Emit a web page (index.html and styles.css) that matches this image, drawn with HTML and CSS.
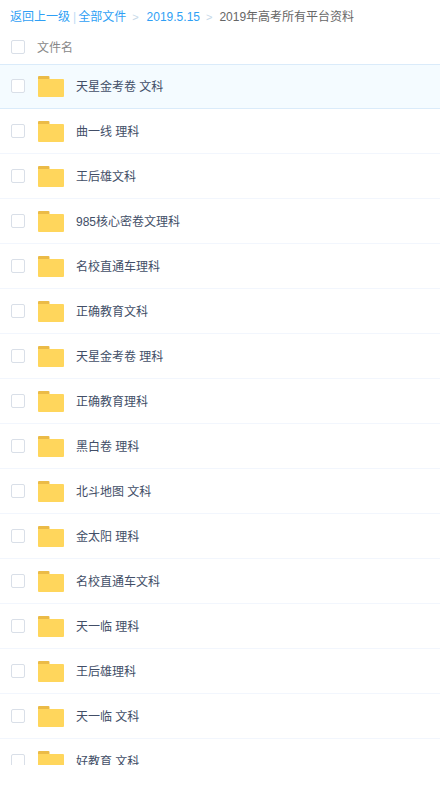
FILE: index.html
```html
<!DOCTYPE html>
<html lang="zh-CN">
<head>
<meta charset="utf-8">
<title>2019年高考所有平台资料</title>
<link rel="stylesheet" href="styles.css">
</head>
<body>
<svg class="defs" width="0" height="0" aria-hidden="true">
  <symbol id="folder" viewBox="0 0 26 21">
    <path fill="#EBBB47" d="M1 0h9.5a1 1 0 0 1 1 1v3H0V1a1 1 0 0 1 1-1z"/>
    <path fill="#FFD65C" d="M0 3h25a1 1 0 0 1 1 1v16a1 1 0 0 1-1 1H1a1 1 0 0 1-1-1z"/>
  </symbol>
</svg>
<main class="page">
  <nav class="crumbs">
    <a class="link">返回上一级</a><span class="bar">|</span><a class="link">全部文件</a>
    <span class="sep">&gt;</span><a class="link">2019.5.15</a>
    <span class="sep sep-last">&gt;</span><span class="current">2019年高考所有平台资料</span>
  </nav>
  <div class="head">
    <span class="check"></span>
    <span class="head-name">文件名</span>
  </div>
  <ul class="list">
    <li class="row active"><span class="check"></span><svg class="folder"><use href="#folder"/></svg><span class="name">天星金考卷 文科</span></li>
    <li class="row"><span class="check"></span><svg class="folder"><use href="#folder"/></svg><span class="name">曲一线 理科</span></li>
    <li class="row"><span class="check"></span><svg class="folder"><use href="#folder"/></svg><span class="name">王后雄文科</span></li>
    <li class="row"><span class="check"></span><svg class="folder"><use href="#folder"/></svg><span class="name">985核心密卷文理科</span></li>
    <li class="row"><span class="check"></span><svg class="folder"><use href="#folder"/></svg><span class="name">名校直通车理科</span></li>
    <li class="row"><span class="check"></span><svg class="folder"><use href="#folder"/></svg><span class="name">正确教育文科</span></li>
    <li class="row"><span class="check"></span><svg class="folder"><use href="#folder"/></svg><span class="name">天星金考卷 理科</span></li>
    <li class="row"><span class="check"></span><svg class="folder"><use href="#folder"/></svg><span class="name">正确教育理科</span></li>
    <li class="row"><span class="check"></span><svg class="folder"><use href="#folder"/></svg><span class="name">黑白卷 理科</span></li>
    <li class="row"><span class="check"></span><svg class="folder"><use href="#folder"/></svg><span class="name">北斗地图 文科</span></li>
    <li class="row"><span class="check"></span><svg class="folder"><use href="#folder"/></svg><span class="name">金太阳 理科</span></li>
    <li class="row"><span class="check"></span><svg class="folder"><use href="#folder"/></svg><span class="name">名校直通车文科</span></li>
    <li class="row"><span class="check"></span><svg class="folder"><use href="#folder"/></svg><span class="name">天一临 理科</span></li>
    <li class="row"><span class="check"></span><svg class="folder"><use href="#folder"/></svg><span class="name">王后雄理科</span></li>
    <li class="row"><span class="check"></span><svg class="folder"><use href="#folder"/></svg><span class="name">天一临 文科</span></li>
    <li class="row"><span class="check"></span><svg class="folder"><use href="#folder"/></svg><span class="name">好教育 文科</span></li>
  </ul>
</main>
</body>
</html>
```
FILE: styles.css
```css
* { box-sizing: border-box; }
html, body { margin: 0; padding: 0; background: #fff; }
body {
  width: 440px;
  height: 788px;
  overflow: hidden;
  font-family: "Liberation Sans", "Noto Sans CJK SC", sans-serif;
  font-size: 12px;
  color: #424e67;
}
.defs { display: block; height: 0; }
.page { display: block; }
.crumbs {
  display: flex;
  align-items: baseline;
  height: 32px;
  padding: 7px 0 0 10px;
  color: #666;
  white-space: nowrap;
}
.link { color: #2f9ff5; }
.bar { color: #c1dcf5; margin: 0 2px 0 3px; }
.sep { color: #c5d8e8; font-size: 11px; margin: 0 8px 0 6px; }
.sep-last { margin: 0 7px 0 6px; }
.current { color: #666; }
.head {
  display: flex;
  align-items: center;
  height: 32px;
  padding: 0 0 2px 11px;
}
.head-name { color: #888; margin-left: 12px; padding-bottom: 1px; }
.check {
  flex: none;
  width: 14px;
  height: 14px;
  border: 1px solid #d9dfe8;
  border-radius: 2px;
  background: #fff;
}
.list {
  list-style: none;
  margin: 0;
  padding: 0;
  height: 701px;
  overflow: hidden;
}
.row {
  display: flex;
  align-items: center;
  height: 45px;
  padding-left: 11px;
  border-bottom: 1px solid #f2f6fd;
}
.row.active {
  background: #f4fbff;
  box-shadow: inset 0 1px 0 #daebfa;
  border-bottom-color: #daebfa;
}
.folder { flex: none; width: 26px; height: 21px; margin: 1px 0 0 13px; }
.name { margin-left: 12px; padding-bottom: 2px; white-space: nowrap; }
```
